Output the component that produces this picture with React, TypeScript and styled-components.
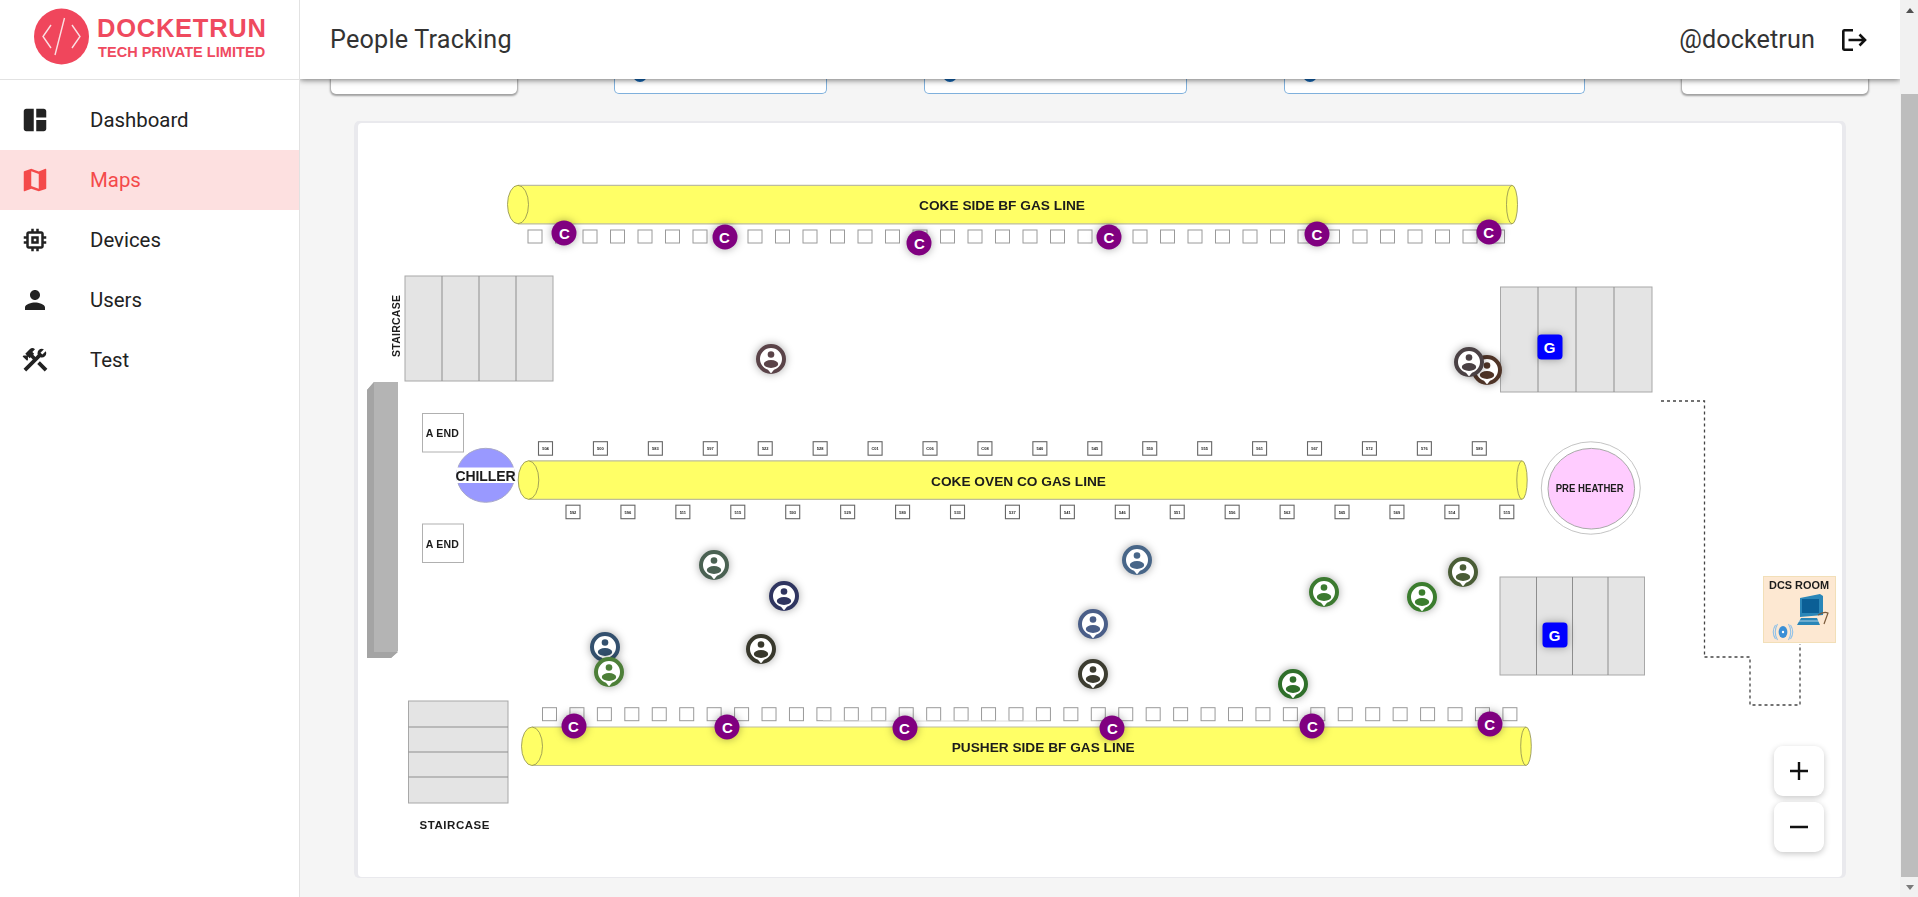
import React from "react";
import styled, { createGlobalStyle } from "styled-components";
import { MdSpaceDashboard, MdMap, MdMemory, MdPerson, MdConstruction } from "react-icons/md";

const Global = createGlobalStyle`
  html, body { margin: 0; padding: 0; height: 100%; overflow: hidden; background: #f5f5f5; }
  body { font-family: Roboto, "Liberation Sans", sans-serif; }
  * { box-sizing: border-box; }
`;

const Shell = styled.div`
  display: flex;
  width: 1918px;
  height: 897px;
  overflow: hidden;
`;
const Sidebar = styled.aside`
  width: 300px;
  flex: none;
  background: #fff;
  border-right: 1px solid #e2e2e2;
  position: relative;
  z-index: 3;
`;
const LogoBar = styled.div`
  height: 80px;
  border-bottom: 1px solid #e2e2e2;
  display: flex;
  align-items: flex-start;
  padding: 8px 0 0 34px;
  gap: 8px;
`;
const LogoText = styled.div`
  display: flex;
  flex-direction: column;
  font-family: "Liberation Sans", Arial, sans-serif;
  font-weight: 700;
  color: #ef4a5f;
  white-space: nowrap;
`;
const LogoMain = styled.span`
  font-size: 25.5px;
  line-height: 29px;
  margin-top: 6px;
  letter-spacing: 0.75px;
`;
const LogoSub = styled.span`
  font-size: 14.5px;
  line-height: 17px;
  margin-top: 1px;
  margin-left: 1px;
  letter-spacing: 0.05px;
`;
const Nav = styled.nav`
  padding-top: 10px;
  display: flex;
  flex-direction: column;
`;
const NavItem = styled.div<{ $active?: boolean }>`
  height: 60px;
  display: flex;
  align-items: center;
  padding-left: 20px;
  gap: 40px;
  font-size: 20.4px;
  color: ${(p) => (p.$active ? "#f44a4a" : "#222")};
  background: ${(p) => (p.$active ? "#fde0e0" : "transparent")};
  svg { flex: none; width: 30px; height: 30px; }
`;
const Main = styled.main`
  flex: 1;
  min-width: 0;
  display: flex;
  flex-direction: column;
`;
const Header = styled.header`
  height: 79px;
  flex: none;
  background: #fff;
  display: flex;
  align-items: center;
  padding: 0 33px 0 30px;
  position: relative;
  z-index: 2;
  box-shadow: 0 1px 6px rgba(0, 0, 0, 0.55);
  color: #333;
  font-size: 25.2px;
`;
const Title = styled.div`
  flex: 1;
  letter-spacing: 0.2px;
`;
const Account = styled.div`
  display: flex;
  align-items: center;
  gap: 27px;
  letter-spacing: 0.1px;
`;
const StatStrip = styled.div`
  height: 15px;
  flex: none;
  display: flex;
  gap: 97px;
  padding: 0 0 0 31px;
`;
const StatCard = styled.div<{ $w: number; $outlined?: boolean }>`
  width: ${(p) => p.$w}px;
  flex: none;
  height: 15px;
  background: #fff;
  border-radius: 0 0 5px 5px;
  position: relative;
  overflow: hidden;
  border: ${(p) => (p.$outlined ? "1px solid #7fb0dc" : "none")};
  border-top: none;
  box-shadow: ${(p) => (p.$outlined ? "none" : "0 1px 2px 1px rgba(0,0,0,.35)")};
`;
const StatDot = styled.span`
  position: absolute;
  left: 18px;
  top: -11px;
  width: 14px;
  height: 14px;
  border-radius: 50%;
  background: #1565b0;
`;
const Card = styled.section`
  position: relative;
  margin: 29px 58px 0;
  height: 754px;
  background: #fff;
  border-radius: 4px;
  box-shadow: 0 0 0 4px #e9e9ed;
  clip-path: inset(-2px -4px -1px -4px round 5px);
`;
const Plant = styled.svg`
  display: block;
  width: 100%;
  height: 100%;
  filter: blur(0.3px);
`;
const MapText = styled.text`
  font-family: "Liberation Sans", Arial, sans-serif;
  font-weight: 700;
  fill: #1c1c1c;
  text-anchor: middle;
  dominant-baseline: central;
`;
const Place = styled.div.attrs<{ $x: number; $y: number }>((p) => ({
  style: { left: p.$x - 358, top: p.$y - 123 },
}))<{ $x: number; $y: number }>`
  position: absolute;
  transform: translate(-50%, -50%);
`;
const Tag = styled(Place)<{ $kind: "C" | "G" }>`
  width: 25px;
  height: 25px;
  display: flex;
  align-items: center;
  justify-content: center;
  color: #fff;
  font: 700 15px "Liberation Sans", Arial, sans-serif;
  background: ${(p) => (p.$kind === "C" ? "#800080" : "#0000ff")};
  border-radius: ${(p) => (p.$kind === "C" ? "50%" : "4px")};
  box-shadow: 0 0 9px rgba(0, 0, 0, 0.35);
`;
const Person = styled(Place)`
  width: 30px;
  height: 30px;
  filter: drop-shadow(0 0 4px rgba(0, 0, 0, 0.35));
  svg { display: block; }
`;
const ZoomStack = styled.div`
  position: absolute;
  right: 18px;
  bottom: 25px;
  display: flex;
  flex-direction: column;
  gap: 6px;
`;
const ZoomButton = styled.div`
  width: 50px;
  height: 50px;
  background: #fff;
  border-radius: 9px;
  box-shadow: 0 2px 6px rgba(0, 0, 0, 0.22);
  display: flex;
  align-items: center;
  justify-content: center;
`;
const Scrollbar = styled.div`
  width: 18px;
  flex: none;
  background: #f1f1f1;
  display: flex;
  flex-direction: column;
  align-items: stretch;
  padding-left: 1px;
  position: relative;
  z-index: 3;
`;
const Arrow = styled.div<{ $down?: boolean }>`
  height: 20px;
  flex: none;
  display: flex;
  align-items: center;
  justify-content: center;
  &::after {
    content: "";
    border-left: 4.5px solid transparent;
    border-right: 4.5px solid transparent;
    ${(p) => (p.$down ? "border-top: 5px solid #7a7a7a;" : "border-bottom: 5px solid #505050;")}
  }
`;
const Thumb = styled.div`
  margin-top: 74px;
  height: 787px;
  background: #bdbdbd;
`;

const PIPE = "#ffff66";
const range = (n: number) => Array.from({ length: n }, (_, i) => i);

function Pipe({ x1, x2, y, lrx, rrx, label, lx, lw }: { x1: number; x2: number; y: number; lrx: number; rrx: number; label: string; lx: number; lw: number }) {
  const h = 38.5;
  return (
    <g>
      <rect x={x1} y={y} width={x2 - x1} height={h} fill={PIPE} />
      <line x1={x1} x2={x2} y1={y} y2={y} stroke="#bdbd9c" strokeWidth="1.2" />
      <line x1={x1} x2={x2} y1={y + h} y2={y + h} stroke="#bdbd9c" strokeWidth="1.2" />
      <ellipse cx={x1} cy={y + h / 2} rx={lrx} ry={h / 2} fill={PIPE} stroke="#8c8c50" strokeWidth="0.8" />
      <ellipse cx={x2} cy={y + h / 2} rx={rrx} ry={h / 2} fill={PIPE} stroke="#8c8c50" strokeWidth="0.8" />
      <MapText x={lx + lw / 2} y={y + h / 2 + 1} fontSize="13" textLength={lw} lengthAdjust="spacingAndGlyphs">{label}</MapText>
    </g>
  );
}

function Stairs({ x, y, w, h, cuts, horizontal }: { x: number; y: number; w: number; h: number; cuts: number[]; horizontal?: boolean }) {
  return (
    <g>
      <rect x={x} y={y} width={w} height={h} fill="#e4e4e4" stroke="#a8a8a8" strokeWidth="1" />
      {cuts.map((c) =>
        horizontal ? (
          <line key={c} x1={x} x2={x + w} y1={c} y2={c} stroke="#8e8e8e" />
        ) : (
          <line key={c} x1={c} x2={c} y1={y} y2={y + h} stroke="#8e8e8e" />
        )
      )}
    </g>
  );
}

function SquareRow({ x, y, n, step }: { x: number; y: number; n: number; step: number }) {
  return (
    <g>
      {range(n).map((i) => (
        <rect key={i} x={x + i * step} y={y} width={14} height={13} fill="#fff" stroke="#9a9a9a" strokeWidth="1" />
      ))}
    </g>
  );
}

const upper = ["504", "500", "583", "597", "522", "528", "C01", "C06", "C08", "540", "545", "550", "555", "561", "567", "572", "576", "589"];
const lower = ["592", "596", "511", "515", "593", "529", "580", "533", "537", "541", "546", "551", "556", "562", "565", "569", "514", "515"];

function BoxRow({ x, y, labels }: { x: number; y: number; labels: string[] }) {
  return (
    <g>
      {labels.map((l, i) => (
        <g key={i}>
          <rect x={x + i * 54.93} y={y} width={14} height={13.5} fill="#fff" stroke="#666" strokeWidth="1.1" />
          <MapText x={x + i * 54.93 + 7} y={y + 6.8} fontSize="4" fontWeight="400">{l}</MapText>
        </g>
      ))}
    </g>
  );
}

function PlantDrawing() {
  return (
    <Plant viewBox="358 123 1484 754">
      <polygon points="367,390 374,382 398,382 398,651 391,658 367,658" fill="#b4b4b4" />
      <polygon points="367,390 374,382 374,652 398,652 391,658 367,658" fill="#a4a4a4" />

      <Stairs x={405} y={276} w={148} h={105} cuts={[442, 479, 516]} />
      <MapText x={396} y={326} fontSize="10.5" transform="rotate(-90 396 326)" textLength={62}>STAIRCASE</MapText>
      <Stairs x={1500.5} y={287} w={151.5} h={105} cuts={[1538, 1576, 1614]} />
      <Stairs x={1500} y={577} w={144.5} h={98} cuts={[1536.5, 1572.5, 1608]} />
      <Stairs x={408.5} y={701} w={99.5} h={102} cuts={[727, 752, 777]} horizontal />
      <MapText x={454.5} y={825} fontSize="11.5" textLength={70}>STAIRCASE</MapText>

      <SquareRow x={528} y={230} n={36} step={27.5} />
      <Pipe x1={518} x2={1512} y={185.3} lrx={10.5} rrx={5.5} label="COKE SIDE BF GAS LINE" lx={919} lw={166} />

      <rect x={422.5} y={413.5} width={41} height={38.5} fill="#fff" stroke="#b0b0b0" />
      <MapText x={442.3} y={433} fontSize="10.5" textLength={33}>A END</MapText>
      <rect x={422.5} y={524} width={41} height={38.5} fill="#fff" stroke="#b0b0b0" />
      <MapText x={442.3} y={543.5} fontSize="10.5" textLength={33}>A END</MapText>

      <ellipse cx={485.7} cy={475.3} rx={29} ry={27} fill="#9999ff" stroke="#a8a8c8" />
      <rect x={456.8} y={467.5} width={57.8} height={15.5} fill="#fff" />
      <MapText x={485.5} y={475.5} fontSize="14" textLength={60}>CHILLER</MapText>

      <BoxRow x={538.5} y={441.7} labels={upper} />
      <BoxRow x={566} y={505.2} labels={lower} />
      <Pipe x1={528.5} x2={1522} y={460.8} lrx={10.3} rrx={5.2} label="COKE OVEN CO GAS LINE" lx={931} lw={175} />

      <ellipse cx={1590.8} cy={488} rx={49.5} ry={46.2} fill="#fff" stroke="#c4c4c4" />
      <ellipse cx={1591.3} cy={488.7} rx={43.3} ry={40.3} fill="#ffccff" stroke="#a9a9a9" />
      <MapText x={1589.7} y={488.3} fontSize="10.5" textLength={68} lengthAdjust="spacingAndGlyphs">PRE HEATHER</MapText>

      <SquareRow x={542.5} y={707.7} n={36} step={27.44} />
      <path d="M823 721H1040" stroke="#dcdcdc" strokeWidth="1" fill="none" />
      <Pipe x1={532} x2={1526} y={727} lrx={10.5} rrx={5.3} label="PUSHER SIDE BF GAS LINE" lx={951.7} lw={183} />

      <path d="M1661 401H1704.5V657M1704.5 657H1750V705H1800V644" fill="none" stroke="#444" strokeWidth="1.3" strokeDasharray="3 3" />

      <rect x={1763.5} y={576.5} width={72} height={66} fill="#fde8d2" stroke="#f2dfb8" />
      <MapText x={1799} y={585} fontSize="10.5" textLength={60} lengthAdjust="spacingAndGlyphs">DCS ROOM</MapText>
      <polygon points="1800,598 1820,594 1823,596 1823,615 1800,617" fill="#2a86b8" />
      <rect x={1802} y={599} width={17} height={14} fill="#0b5f96" />
      <polygon points="1801,618 1817,618 1820,625 1797,625" fill="#2a86b8" />
      <path d="M1797 621H1819" stroke="#e8f2f6" strokeWidth="0.7" />
      <path d="M1818 615Q1824 611 1828 613L1824 624" fill="none" stroke="#7a5a3a" strokeWidth="1.2" />
      <ellipse cx={1783} cy={632} rx={4.4} ry={6} fill="#3a8fd6" />
      <circle cx={1783} cy={632} r={1.2} fill="#fff" />
      <path d="M1777.5 624Q1773 632 1777.5 640M1788.5 624Q1793 632 1788.5 640M1775.5 625Q1771 632 1775.5 639M1790.5 625Q1795 632 1790.5 639" fill="none" stroke="#8fc0e8" strokeWidth="1.1" />
    </Plant>
  );
}

const tags: { x: number; y: number; k: "C" | "G" }[] = [
  { x: 564.3, y: 233.3, k: "C" }, { x: 724.5, y: 237.3, k: "C" }, { x: 919.4, y: 243.3, k: "C" },
  { x: 1109, y: 237.3, k: "C" }, { x: 1317, y: 234.3, k: "C" }, { x: 1488.7, y: 232.3, k: "C" },
  { x: 573.5, y: 726.3, k: "C" }, { x: 727.3, y: 727.3, k: "C" }, { x: 904.5, y: 728.3, k: "C" },
  { x: 1112.3, y: 728.3, k: "C" }, { x: 1312.3, y: 726.3, k: "C" }, { x: 1489.6, y: 724.3, k: "C" },
  { x: 1549.5, y: 346.5, k: "G" }, { x: 1554.5, y: 634.5, k: "G" },
];
const people = [
  { x: 771, y: 359, c: "#5a4348" }, { x: 1486.8, y: 370, c: "#4f3427" }, { x: 1469, y: 361.7, c: "#4a4144" },
  { x: 714, y: 565, c: "#4a6152" }, { x: 784, y: 596, c: "#2f3560" }, { x: 605, y: 646.7, c: "#33506e" },
  { x: 609, y: 672, c: "#4d7f38" }, { x: 761, y: 648.7, c: "#38382c" }, { x: 1137, y: 560, c: "#486688" },
  { x: 1093, y: 624, c: "#4a5e88" }, { x: 1093, y: 674, c: "#3c3c30" }, { x: 1324, y: 592, c: "#3c7a30" },
  { x: 1293, y: 684, c: "#2f6f2a" }, { x: 1422, y: 597, c: "#3b7d2e" }, { x: 1463, y: 572, c: "#4a5d36" },
];

function PersonGlyph({ color }: { color: string }) {
  return (
    <svg width="30" height="30" viewBox="0 0 30 30">
      <circle cx="15" cy="15" r="13" fill="#fff" stroke={color} strokeWidth="4" />
      <circle cx="15" cy="10.5" r="3.3" fill={color} />
      <ellipse cx="15" cy="20" rx="7.2" ry="3.9" fill={color} />
      <polygon points="11.5,25 18.5,25 15,29.5" fill="#fff" />
    </svg>
  );
}

export default function App() {
  return (
    <>
      <Global />
      <Shell>
        <Sidebar>
          <LogoBar>
            <svg width="55" height="57" viewBox="0 0 55 57">
              <ellipse cx="27.5" cy="28.5" rx="27.5" ry="28" fill="#f0465c" />
              <path d="M17 17L9 28.5L17 40M38 17L46 28.5L38 40M30.5 10L21 47" fill="none" stroke="#fbdfe2" strokeWidth="1.4" />
            </svg>
            <LogoText>
              <LogoMain>DOCKETRUN</LogoMain>
              <LogoSub>TECH PRIVATE LIMITED</LogoSub>
            </LogoText>
          </LogoBar>
          <Nav>
            <NavItem><MdSpaceDashboard />Dashboard</NavItem>
            <NavItem $active><MdMap />Maps</NavItem>
            <NavItem><MdMemory />Devices</NavItem>
            <NavItem><MdPerson />Users</NavItem>
            <NavItem><MdConstruction />Test</NavItem>
          </Nav>
        </Sidebar>
        <Main>
          <Header>
            <Title>People Tracking</Title>
            <Account>
              <span>@docketrun</span>
              <svg width="25" height="22" viewBox="0 0 25 22" fill="none" stroke="#111" strokeWidth="2.6">
                <path d="M11 1.3H2.2A1 1 0 0 0 1.3 2.3V19.7A1 1 0 0 0 2.2 20.7H11" />
                <path d="M6.5 11H23M17.5 5.5L23 11L17.5 16.5" />
              </svg>
            </Account>
          </Header>
          <StatStrip>
            <StatCard $w={186} />
            <StatCard $w={212.5} $outlined><StatDot /></StatCard>
            <StatCard $w={263.5} $outlined><StatDot /></StatCard>
            <StatCard $w={301} $outlined><StatDot /></StatCard>
            <StatCard $w={186} />
          </StatStrip>
          <Card>
            <PlantDrawing />
            {tags.map((t, i) => (
              <Tag key={i} $x={t.x} $y={t.y} $kind={t.k}>{t.k}</Tag>
            ))}
            {people.map((p, i) => (
              <Person key={i} $x={p.x} $y={p.y}><PersonGlyph color={p.c} /></Person>
            ))}
            <ZoomStack>
              <ZoomButton>
                <svg width="20" height="20" viewBox="0 0 20 20"><path d="M10 1V19M1 10H19" stroke="#111" strokeWidth="2.4" /></svg>
              </ZoomButton>
              <ZoomButton>
                <svg width="20" height="20" viewBox="0 0 20 20"><path d="M1 10H19" stroke="#111" strokeWidth="2.4" /></svg>
              </ZoomButton>
            </ZoomStack>
          </Card>
        </Main>
        <Scrollbar>
          <Arrow />
          <Thumb />
          <Arrow $down />
        </Scrollbar>
      </Shell>
    </>
  );
}
